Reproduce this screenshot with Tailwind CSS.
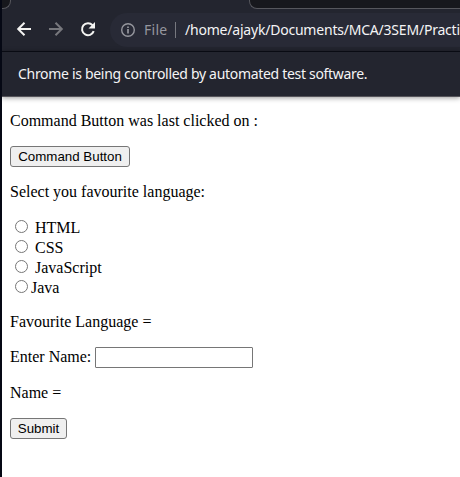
<!DOCTYPE html>
<html lang="en">
<head>
<meta charset="utf-8">
<title>Command Button</title>
<script src="https://cdn.jsdelivr.net/npm/@tailwindcss/browser@4"></script>
</head>
<body class="h-[477px] w-[460px] overflow-hidden border-l-2 border-[#050814] bg-white">
<header class="flex flex-col whitespace-nowrap bg-[#23252f] font-['Noto_Sans',sans-serif] text-[14px] text-[#f4f4f5]">
  <!-- tab strip -->
  <div class="flex h-[9px] justify-between">
    <div class="h-[9px] w-[9px] rounded-br-[8px] border-r border-b border-[#56575d] bg-[#17181d]"></div>
    <div class="h-[9px] w-[211px] rounded-bl-[8px] border-b border-l border-[#56575d] bg-[#17181d]"></div>
  </div>
  <!-- toolbar -->
  <div class="flex h-[42px] items-start pt-1">
    <svg class="mt-2 ml-[14px] h-4 w-4 shrink-0" viewBox="0 0 16 16" fill="none" stroke="#f4f4f2" stroke-width="2"><path d="M15 8H3M8.5 1.7L2.2 8L8.5 14.3"/></svg>
    <svg class="mt-2 ml-4 h-4 w-4 shrink-0" viewBox="0 0 16 16" fill="none" stroke="#77787d" stroke-width="2"><path d="M1 8H13M7.5 1.7L13.8 8L7.5 14.3"/></svg>
    <svg class="mt-2 ml-4 h-4 w-4 shrink-0" viewBox="0 0 16 16" fill="none" stroke="#f4f4f2" stroke-width="2"><path d="M13.7 10.2A6 6 0 1 1 12.5 4.2L14 5.7"/><path d="M15 1V7.5H8.5Z" fill="#f4f4f2" stroke="none"/></svg>
    <div class="ml-[14px] flex h-[34px] flex-1 items-center rounded-l-full bg-[#282a36] pl-[11px]">
      <svg class="h-[14px] w-[14px] shrink-0" viewBox="0 0 14 14" fill="none" stroke="#96979e" stroke-width="1.4"><circle cx="7" cy="7" r="6.3"/><path d="M7 6V10.5M7 3.4V4.9" stroke-width="1.7"/></svg>
      <span class="ml-[9px] w-[24px] shrink-0 pb-0.5 tracking-[0.25px] text-[#96979e]">File</span>
      <span class="ml-[7px] h-4 w-px shrink-0 bg-[#77787f]"></span>
      <span class="ml-[9px] pb-0.5 tracking-[-0.21px]">/home/ajayk/Documents/MCA/3SEM/Practi</span>
    </div>
  </div>
  <!-- automation infobar -->
  <div class="flex h-[46px] items-center border-t border-b border-t-[#090b13] border-b-[#55545a] pb-0.5 pl-4 shadow-[0_1px_5px_rgba(0,0,0,0.4)]">
    <span class="tracking-[-0.31px]">Chrome is being controlled by automated test software.</span>
  </div>
</header>
<main class="flex flex-col items-start px-2 pt-[15px] font-['Liberation_Serif',serif] text-[16px] leading-[18px] text-black">
  <p>Command Button was last clicked on :</p>
  <button class="mt-4 h-[21px] w-[120px] rounded-[3px] border border-[#767676] bg-[#efefef] font-['Liberation_Sans',sans-serif] text-[13.333px] leading-[15px]">Command Button</button>
  <p class="mt-4">Select you favourite language:</p>
  <div class="mt-[17px] flex flex-col pl-[5px] leading-5">
    <label class="flex h-5"><input type="radio" name="language" class="mt-0.5 mr-[7px] h-[13px] w-[13px]">HTML</label>
    <label class="flex h-5"><input type="radio" name="language" class="mt-0.5 mr-[7px] h-[13px] w-[13px]">CSS</label>
    <label class="flex h-5"><input type="radio" name="language" class="mt-0.5 mr-[7px] h-[13px] w-[13px]">JavaScript</label>
    <label class="flex h-5"><input type="radio" name="language" class="mt-0.5 mr-[3px] h-[13px] w-[13px]">Java</label>
  </div>
  <p class="mt-[15px]">Favourite Language =</p>
  <label class="mt-4 flex h-[21px] items-start"><span class="w-[85px] pt-px">Enter Name:</span><input type="text" class="h-[21px] w-[158px] rounded-[1px] border border-[#767676] bg-white"></label>
  <p class="mt-4">Name =</p>
  <button class="mt-4 h-[21px] w-[57px] rounded-[3px] border border-[#767676] bg-[#efefef] font-['Liberation_Sans',sans-serif] text-[13.333px] leading-[15px]">Submit</button>
</main>
</body>
</html>
